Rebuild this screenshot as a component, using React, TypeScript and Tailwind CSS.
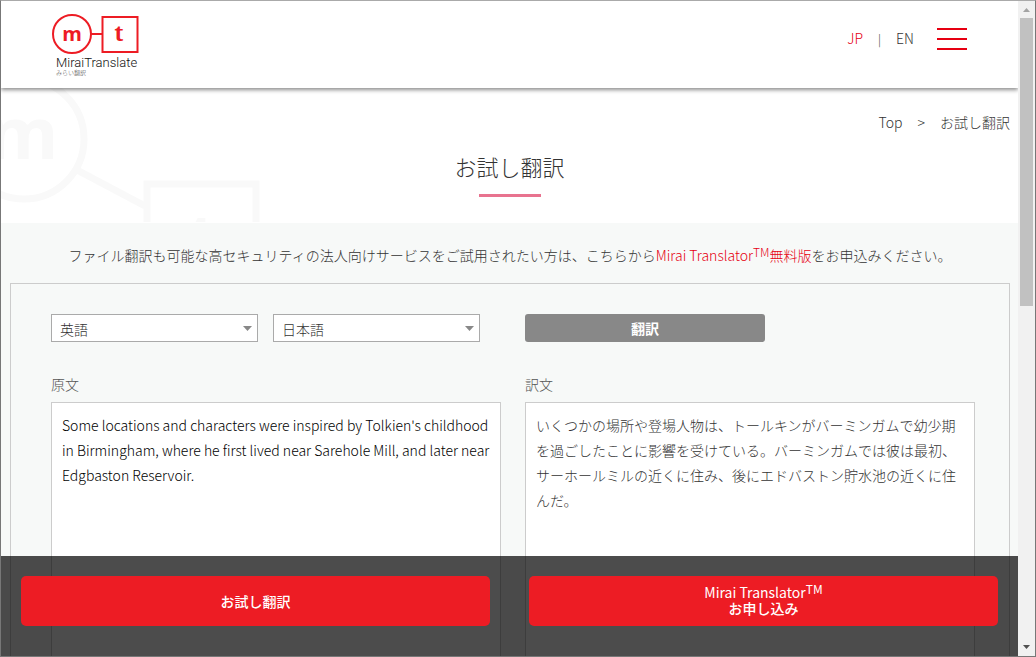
import React, { useState } from "react";

interface LangSelectProps {
  label: string;
  value: string;
  onChange: (value: string) => void;
}

const LANGUAGES = ["英語", "日本語"];

const LangSelect: React.FC<LangSelectProps> = ({ label, value, onChange }) => (
  <div className="relative flex-1">
    <select
      aria-label={label}
      value={value}
      onChange={(e) => onChange(e.target.value)}
      className="block h-7 w-full appearance-none border border-[#aaa] bg-white pt-0.5 pl-2 text-sm leading-6 text-[#333]"
    >
      {LANGUAGES.map((lang) => (
        <option key={lang}>{lang}</option>
      ))}
    </select>
    <svg className="pointer-events-none absolute top-3 right-1.5" width="9" height="5" viewBox="0 0 9 5">
      <path d="M0 0h9L4.5 5z" fill="#888" />
    </svg>
  </div>
);

const ProductName = () => (
  <>
    Mirai Translator<sup className="top-[-4px] text-xs leading-none">TM</sup>
  </>
);

// ロゴ
const Logo = () => (
  <svg width="90" height="64" viewBox="0 0 90 64" role="img" aria-label="MiraiTranslate みらい翻訳">
    <g fill="none" stroke="#ed1c24" strokeWidth="2">
      <circle cx="21" cy="22" r="19" />
      <path d="M40 22h12" />
      <rect x="51.500" y="5" width="35" height="35" />
    </g>
    <g fill="#ed1c24" fontWeight="700" textAnchor="middle">
      <text x="21" y="29" fontSize="20" fontFamily="'Open Sans', sans-serif">m</text>
      <text x="68" y="29" fontSize="22" fontFamily="'Noto Serif', 'DejaVu Serif', serif">t</text>
    </g>
    <text x="5" y="55" fontSize="13" fill="#111" fontFamily="Roboto, sans-serif">MiraiTranslate</text>
    <text x="5" y="63" fontSize="6" fill="#444" fontFamily="'Noto Sans CJK JP', sans-serif">みらい翻訳</text>
  </svg>
);

const Watermark = () => (
  <svg className="absolute top-0 left-0" width="270" height="134" viewBox="0 0 270 134" aria-hidden="true">
    <g fill="none" stroke="#f9f9f9" strokeWidth="7">
      <circle cx="23" cy="51" r="60" />
      <path d="M76 82l68 36" />
      <rect x="146" y="96" width="109" height="109" />
    </g>
    <g fill="#f9f9f9" fontWeight="700" textAnchor="middle">
      <text x="22" y="71" fontSize="72" fontFamily="'Open Sans', sans-serif">m</text>
      <text x="199" y="188" fontSize="104" fontFamily="'Liberation Serif', serif">t</text>
    </g>
  </svg>
);

const Scrollbar = () => (
  <div className="flex w-[17px] shrink-0 flex-col items-center bg-[#f1f1f1]" aria-hidden="true">
    <svg width="17" height="17" viewBox="0 0 17 17">
      <path d="M5 11h7L8.500 7z" fill="#a3a3a3" />
    </svg>
    <div className="h-[288px] w-[13px] bg-[#c1c1c1]" />
    <svg className="mt-auto" width="17" height="17" viewBox="0 0 17 17">
      <path d="M5 6h7l-3.500 4z" fill="#505050" />
    </svg>
  </div>
);

const App = () => {
  const [from, setFrom] = useState("英語");
  const [to, setTo] = useState("日本語");
  const [source, setSource] = useState(
    "Some locations and characters were inspired by Tolkien's childhood in Birmingham, where he first lived near Sarehole Mill, and later near Edgbaston Reservoir."
  );

  return (
    <div className="flex h-screen overflow-hidden border border-[#777] border-t-[#aaa] bg-white font-['Noto_Sans_CJK_JP',sans-serif] text-sm font-light text-[#333]">
      <div className="relative min-w-0 flex-1 overflow-hidden">
        <header className="relative z-10 flex h-[87px] justify-between bg-white pr-[51px] pl-[50px] shadow-[0_2px_4px_rgba(0,0,0,0.45)]">
          <a href="#top" className="mt-[11px]">
            <Logo />
          </a>
          <div className="flex h-[76px] items-center">
            <nav className="flex items-center gap-[15px] pb-0.5">
              <a href="#jp" className="text-[#e60012]">JP</a>
              <span className="pt-0.5 text-xs">|</span>
              <a href="#en">EN</a>
            </nav>
            <button aria-label="メニュー" className="ml-[23px] flex w-[30px] flex-col gap-2">
              <span className="h-0.5 w-full bg-[#e60012]" />
              <span className="h-0.5 w-full bg-[#e60012]" />
              <span className="h-0.5 w-full bg-[#e60012]" />
            </button>
          </div>
        </header>

        <section className="relative h-[135px] overflow-hidden">
          <Watermark />
          <nav className="relative flex justify-end gap-[15px] pt-6 pr-2 leading-5">
            <a href="#top">Top</a>
            <span>&gt;</span>
            <span>お試し翻訳</span>
          </nav>
          <h1 className="relative mt-[18px] text-center text-[22px] leading-8">お試し翻訳</h1>
          <div className="relative mx-auto mt-3 h-[3px] w-[62px] bg-[#e8738f]" />
        </section>

        <main className="bg-[#f7f9f8] pt-5 pr-2 pl-[9px]">
          <p className="text-center leading-6">
            ファイル翻訳も可能な高セキュリティの法人向けサービスをご試用されたい方は、こちらから
            <a href="#free" className="text-[#e60012]">
              <ProductName />
              無料版
            </a>
            をお申込みください。
          </p>

          <div className="mt-4 grid grid-cols-2 gap-x-6 border border-[#ccc] pt-[30px] pr-[34px] pl-10">
            <div className="mr-[21px] flex gap-[15px]">
              <LangSelect label="翻訳元の言語" value={from} onChange={setFrom} />
              <LangSelect label="翻訳先の言語" value={to} onChange={setTo} />
            </div>
            <button className="h-7 w-60 rounded-[3px] bg-[#888] font-bold text-white">翻訳</button>

            <label htmlFor="source" className="mt-[31px] mb-[7px] leading-[22px] text-[#555]">原文</label>
            <label htmlFor="result" className="mt-[31px] mb-[7px] leading-[22px] text-[#555]">訳文</label>
            <textarea
              id="source"
              value={source}
              onChange={(e) => setSource(e.target.value)}
              className="h-[300px] resize-none border border-[#ccc] bg-white py-2.5 pr-1 pl-2.5 leading-[25px] text-black"
            />
            <textarea
              id="result"
              readOnly
              value="いくつかの場所や登場人物は、トールキンがバーミンガムで幼少期を過ごしたことに影響を受けている。バーミンガムでは彼は最初、サーホールミルの近くに住み、後にエドバストン貯水池の近くに住んだ。"
              className="h-[300px] resize-none border border-[#ccc] bg-white px-2.5 py-2.5 leading-[25px]"
            />
          </div>
        </main>

        {/* 下部固定バー */}
        <div className="absolute inset-x-0 bottom-0 z-10 grid h-[100px] grid-cols-2 items-start gap-[39px] bg-black/70 px-5 pt-5">
          <button className="h-[50px] rounded-[5px] bg-[#ed1c24] font-medium text-white">お試し翻訳</button>
          <button className="h-[50px] rounded-[5px] bg-[#ed1c24] pb-0.5 leading-4 font-medium text-white">
            <span className="block font-normal">
              <ProductName />
            </span>
            <span className="block">お申し込み</span>
          </button>
        </div>
      </div>
      <Scrollbar />
    </div>
  );
};

export default App;
